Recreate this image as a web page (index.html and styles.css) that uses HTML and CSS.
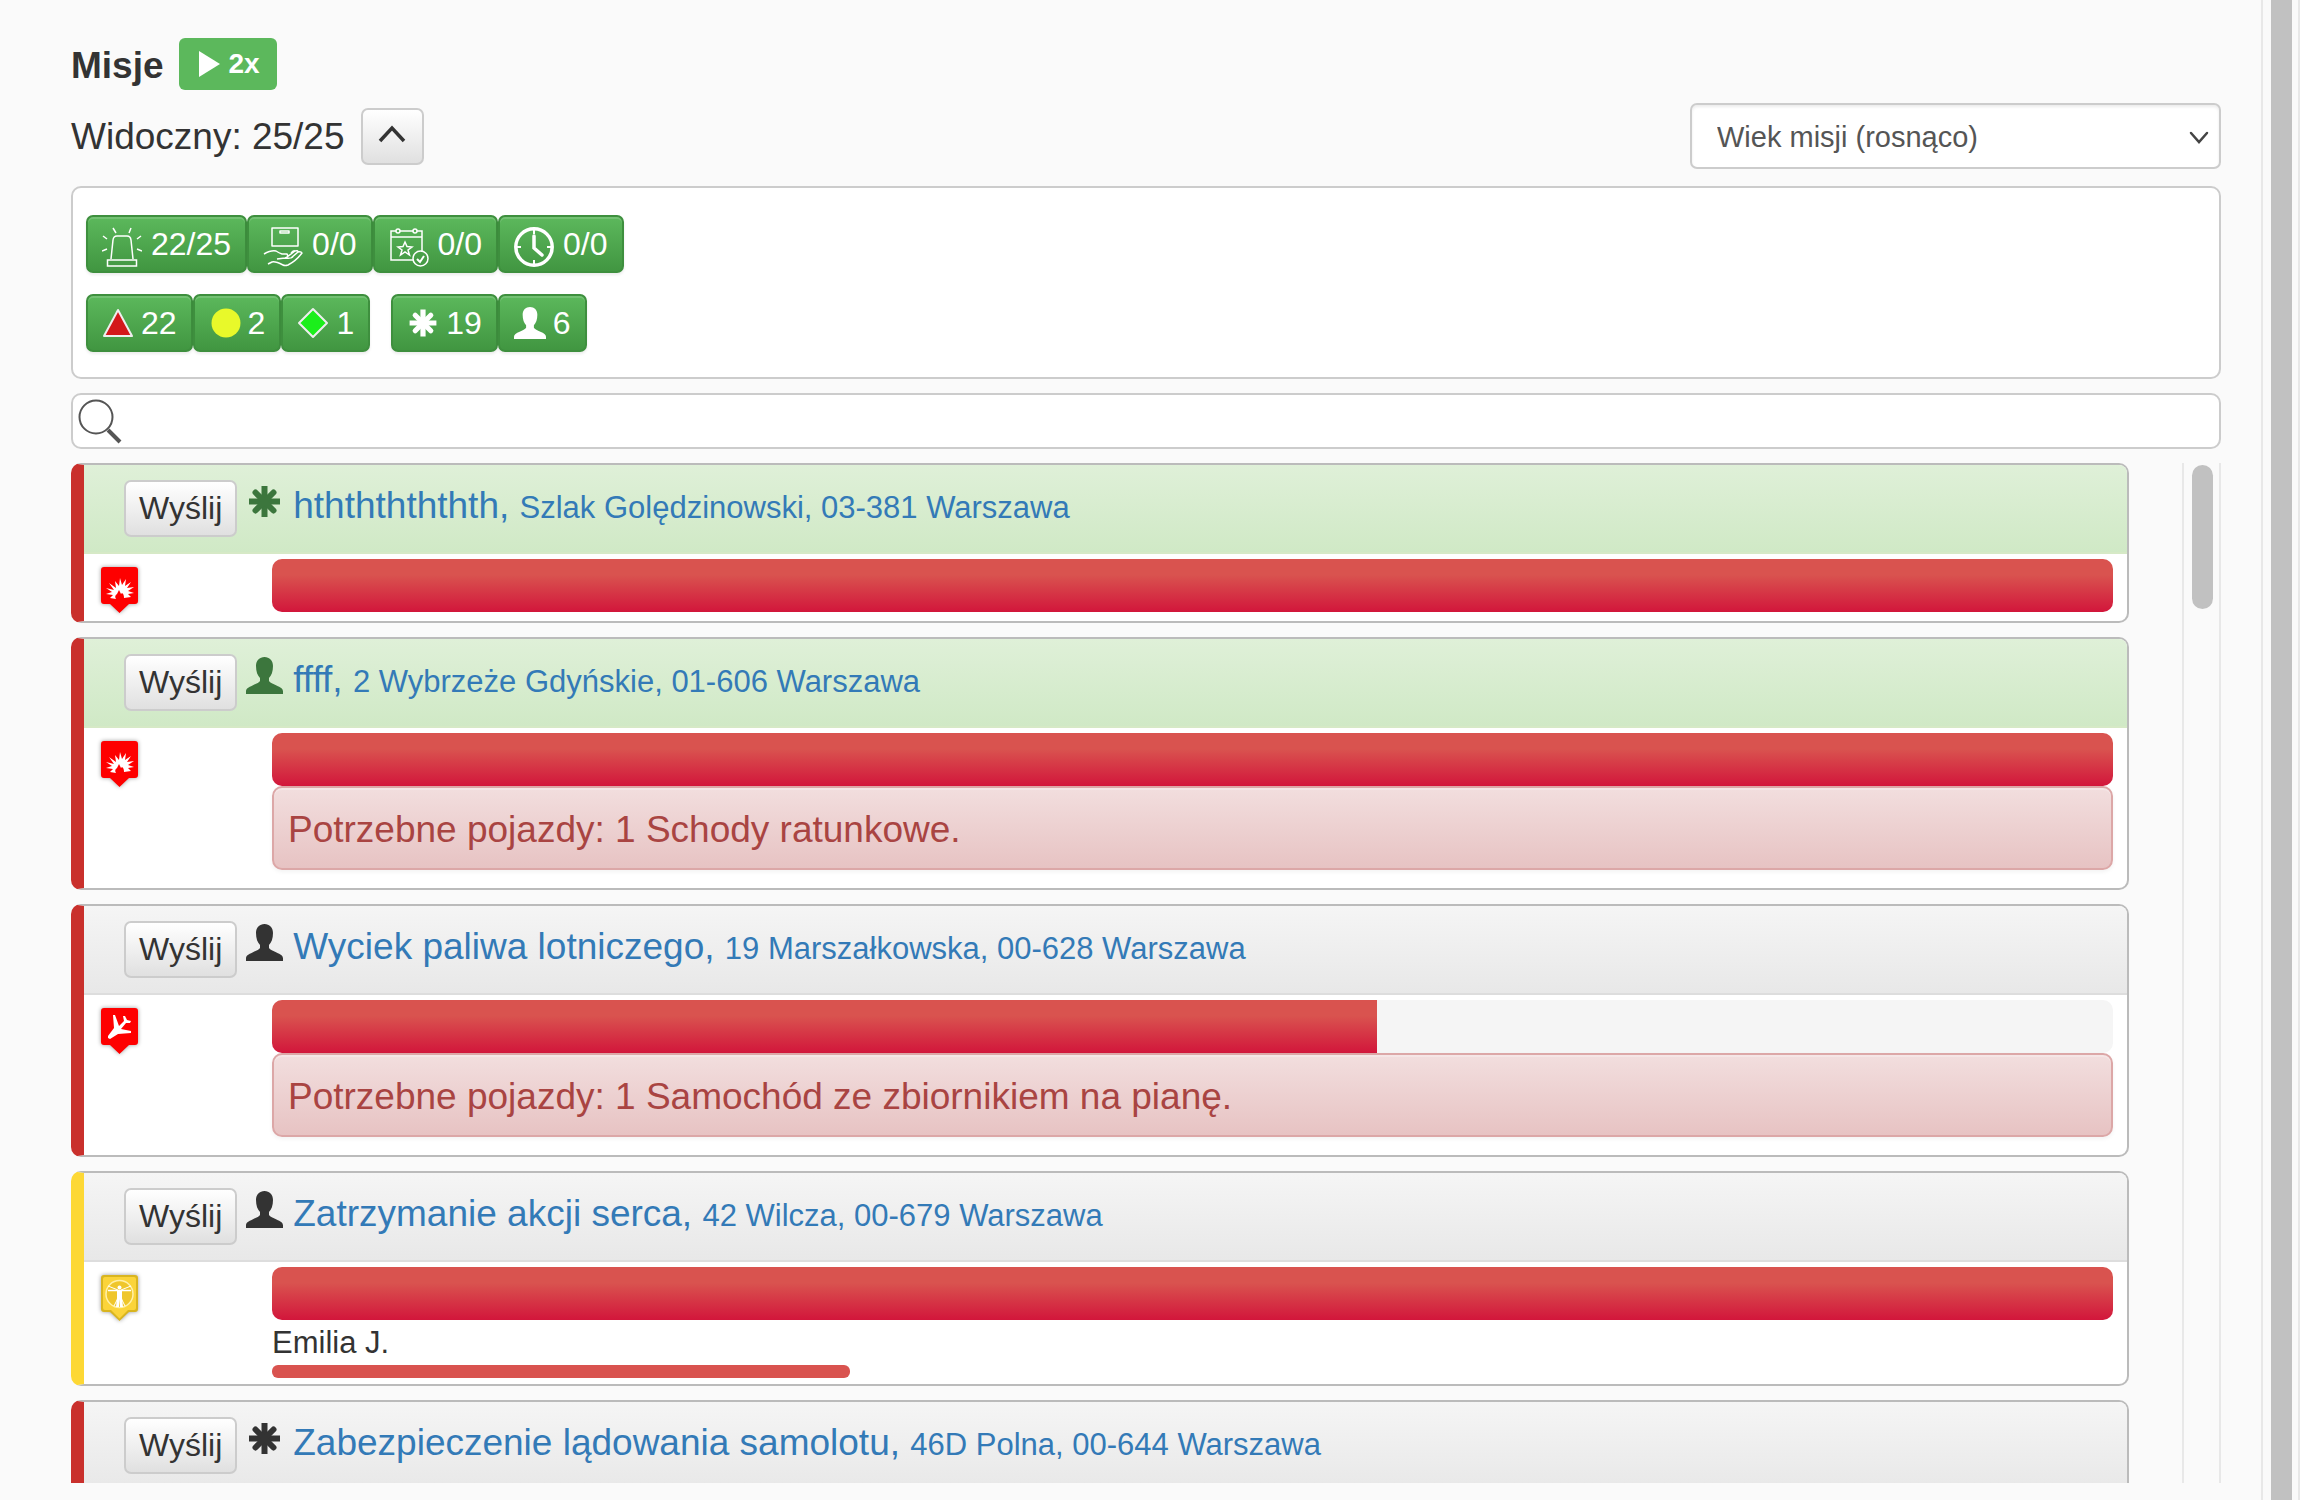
FILE: index.html
```html
<!DOCTYPE html>
<html lang="pl">
<head>
<meta charset="utf-8">
<meta name="viewport" content="width=device-width, initial-scale=1">
<title>Misje</title>
<link rel="stylesheet" href="styles.css">
</head>
<body>
<svg class="defs" aria-hidden="true">
  <symbol id="asterisk" viewBox="0 0 37 37">
    <g stroke="currentColor" stroke-width="6" stroke-linecap="round">
      <path stroke-linecap="butt" d="M18.500 3v31M3 18.500h31"/><path d="M9.500 9.500l18 18M27.500 9.500l-18 18"/>
    </g>
  </symbol>
  <symbol id="user" viewBox="0 0 37 37">
    <path fill="currentColor" d="M18.500 0C23.500 0 27 3.500 27 9c0 5.500-1.500 9.500-4 12v3c1 1.800 4 2.800 7.500 4.500 4 1.700 6.500 3.200 6.500 6V37H0v-2.500c0-2.800 2.500-4.300 6.500-6 3.500-1.700 6.500-2.700 7.500-4.500v-3c-2.500-2.500-4-6.500-4-12 0-5.500 3.500-9 8.500-9z"/>
  </symbol>
  <symbol id="pin" viewBox="0 0 37 46">
    <path d="M3 0h31a3 3 0 0 1 3 3v31a3 3 0 0 1-3 3h-6l-9.500 9L9 37H3a3 3 0 0 1-3-3V3a3 3 0 0 1 3-3z"/>
  </symbol>
  <symbol id="fire" viewBox="0 0 37 46">
    <use href="#pin" fill="#fe0000"/>
    <path fill="#fff" d="M9 31l3-3-7-1 6-2-6-4 8 2-5-7 7 5-1-7 4 5 1-8 2 7 4-6-1 7 6-4-4 6 7-1-6 4 6 2-6 1 3 3-7 1q0-4-2-5l-1 1-2-4-2 4q-3 2-1 5z"/>
  </symbol>
  <symbol id="plane" viewBox="0 0 37 46">
    <use href="#pin" fill="#fe0000"/>
    <path fill="#fff" d="M12 7l2 0 4 11 5-5-1-5 2 0 2 4 4 1-1 2-4 0-5 6 10 2 0 2-13 1-8 5-2-1 0-2 6-8z"/>
  </symbol>
</svg>

<main class="page">
  <header class="title-row">
    <h1 class="title">Misje</h1>
    <button class="speed" type="button"><svg width="21" height="26" viewBox="0 0 21 26" aria-hidden="true"><path d="M0 0l21 13L0 26z" fill="#fff"/></svg>2x</button>
  </header>

  <div class="toolbar">
    <span class="visible">Widoczny: 25/25</span>
    <button class="btn toggle" type="button" aria-label="Zwiń filtry"><svg width="28" height="25" viewBox="0 0 28 25" aria-hidden="true"><path d="M2 17L14 4l12 13" fill="none" stroke="#333" stroke-width="3.500"/></svg></button>
    <div class="sort">
      <select class="sort-select" aria-label="Sortowanie"><option>Wiek misji (rosnąco)</option></select>
      <svg class="sort-arrow" width="20" height="14" viewBox="0 0 20 14" aria-hidden="true"><path d="M2 2l8 9 8-9" fill="none" stroke="#444" stroke-width="2.500" stroke-linecap="round"/></svg>
    </div>
  </div>

  <section class="filters" aria-label="Filtry">
    <div class="filter-row">
      <div class="group">
        <button class="filter wide" type="button"><svg width="40" height="40" viewBox="0 0 40 40" fill="none" stroke="#fff" stroke-width="1.500" aria-hidden="true"><path d="M9 32l2-19q.5-4 4-4h10q3.500 0 4 4l2 19M5.500 33h29v6h-29zM11 1l3 5M29 1l-2 5M1 9l4 3M39 9l-4 3M0 24l5-2M40 24l-5-2"/></svg>22/25</button>
        <button class="filter wide" type="button"><svg width="40" height="40" viewBox="0 0 40 40" fill="none" stroke="#fff" stroke-width="1.500" stroke-linejoin="round" aria-hidden="true"><path d="M9 1h26v18H9zM17 4h9v2h-9zM1 27q7-4 12-3 3 2 6 3h5q2 3-2 4l-8 1M24 30l8-6q3-1 3 1l-7 6M28 26q3-3 4-2M35 25q3-1 4 1-6 8-14 12-3 1-5 0-8-4-11-3l-4 2M22 31q5 1 8-1"/></svg>0/0</button>
        <button class="filter wide" type="button"><svg width="40" height="40" viewBox="0 0 40 40" fill="none" stroke="#fff" stroke-width="1.500" aria-hidden="true"><path d="M24 33H2V4h5M11 4h13M28 4h5v21M2 10h31M16 15l2 4.500 5 .5-4 3 1.500 5-4.500-3-4.500 3 1.500-5-4-3 5-.5z"/><circle cx="9" cy="4" r="2"/><circle cx="26" cy="4" r="2"/><circle cx="31.500" cy="31.500" r="7.500"/><path stroke-width="2" d="M28 32l3 3 4-6"/></svg>0/0</button>
        <button class="filter wide" type="button"><svg width="40" height="40" viewBox="0 0 40 40" fill="none" stroke="#fff" aria-hidden="true"><circle cx="20" cy="20" r="18.200" stroke-width="3.500"/><path stroke-width="3.500" stroke-linecap="round" d="M20 9v12l8 7"/><path stroke-width="2" d="M20 3v4M20 33v4M3 20h4M33 20h4"/></svg>0/0</button>
      </div>
    </div>
    <div class="filter-row">
      <div class="group">
        <button class="filter" type="button"><svg width="32" height="32" viewBox="0 0 32 32" aria-hidden="true"><path d="M16 3l14 26H2z" fill="#d3171a" stroke="#eee" stroke-width="2" stroke-linejoin="round"/></svg>22</button>
        <button class="filter" type="button"><svg width="32" height="32" viewBox="0 0 32 32" aria-hidden="true"><circle cx="17" cy="16" r="14.500" fill="#e8f92a"/></svg>2</button>
        <button class="filter" type="button"><svg width="32" height="32" viewBox="0 0 32 32" aria-hidden="true"><path d="M16 2l14 14-14 14L2 16z" fill="#1bef1b" stroke="#eee" stroke-width="2" stroke-linejoin="round"/></svg>1</button>
      </div>
      <div class="group">
        <button class="filter" type="button"><svg width="32" height="32" aria-hidden="true"><use href="#asterisk"/></svg>19</button>
        <button class="filter" type="button"><svg width="32" height="32" aria-hidden="true"><use href="#user"/></svg>6</button>
      </div>
    </div>
  </section>

  <div class="search">
    <svg width="48" height="48" viewBox="0 0 48 48" fill="none" stroke="#555" aria-hidden="true"><circle cx="20" cy="20" r="16.500" stroke-width="2"/><path d="M32 33l12 12" stroke-width="4"/></svg>
    <input class="search-input" type="text" aria-label="Szukaj">
  </div>

  <div class="scroller">
    <div class="missions">
      <article class="mission">
        <div class="head own">
          <button class="btn send" type="button">Wyślij</button>
          <svg class="kind" aria-hidden="true"><use href="#asterisk"/></svg>
          <a class="name" href="#m1">hthththththth, <small>Szlak Golędzinowski, 03-381 Warszawa</small></a>
        </div>
        <div class="body">
          <svg class="marker" aria-hidden="true"><use href="#fire"/></svg>
          <div class="state">
            <div class="progress"><div class="fill" style="width:100%"></div></div>
          </div>
        </div>
      </article>

      <article class="mission">
        <div class="head own">
          <button class="btn send" type="button">Wyślij</button>
          <svg class="kind" aria-hidden="true"><use href="#user"/></svg>
          <a class="name" href="#m2">ffff, <small>2 Wybrzeże Gdyńskie, 01-606 Warszawa</small></a>
        </div>
        <div class="body">
          <svg class="marker" aria-hidden="true"><use href="#fire"/></svg>
          <div class="state">
            <div class="progress"><div class="fill" style="width:100%"></div></div>
            <div class="missing">Potrzebne pojazdy: 1 Schody ratunkowe.</div>
          </div>
        </div>
      </article>

      <article class="mission">
        <div class="head">
          <button class="btn send" type="button">Wyślij</button>
          <svg class="kind" aria-hidden="true"><use href="#user"/></svg>
          <a class="name" href="#m3">Wyciek paliwa lotniczego, <small>19 Marszałkowska, 00-628 Warszawa</small></a>
        </div>
        <div class="body">
          <svg class="marker" aria-hidden="true"><use href="#plane"/></svg>
          <div class="state">
            <div class="progress"><div class="fill" style="width:60%"></div></div>
            <div class="missing">Potrzebne pojazdy: 1 Samochód ze zbiornikiem na pianę.</div>
          </div>
        </div>
      </article>

      <article class="mission attended">
        <div class="head">
          <button class="btn send" type="button">Wyślij</button>
          <svg class="kind" aria-hidden="true"><use href="#user"/></svg>
          <a class="name" href="#m4">Zatrzymanie akcji serca, <small>42 Wilcza, 00-679 Warszawa</small></a>
        </div>
        <div class="body with-patient">
          <svg class="marker" viewBox="0 0 37 46" aria-hidden="true">
            <use href="#pin" fill="#d9b51f"/>
            <path fill="#fbd43a" d="M4 2h29q2 0 2 2v29q0 2-2 2h-6l-8.500 8.500L10 35H4q-2 0-2-2V4q0-2 2-2z"/>
            <circle cx="18.500" cy="19" r="13.500" fill="#efc62b" stroke="#fff0a8" stroke-width="1.500"/>
            <path d="M17 15l-10-4M20 15l10-4M17 23l-4 8M20 23l4 8" stroke="#fff" stroke-width="1"/>
            <path d="M7 15.500h23" stroke="#fff" stroke-width="1.500"/>
            <path d="M16 15h5v8l1 9h-3l-.5-8-.5 8h-3l1-9z" fill="#fff"/>
            <circle cx="18.500" cy="12.500" r="2" fill="#fff"/>
          </svg>
          <div class="state">
            <div class="progress"><div class="fill" style="width:100%"></div></div>
            <div class="patient">Emilia J.</div>
            <div class="health" style="width:31.400%"></div>
          </div>
        </div>
      </article>

      <article class="mission">
        <div class="head">
          <button class="btn send" type="button">Wyślij</button>
          <svg class="kind" aria-hidden="true"><use href="#asterisk"/></svg>
          <a class="name" href="#m5">Zabezpieczenie lądowania samolotu, <small>46D Polna, 00-644 Warszawa</small></a>
        </div>
        <div class="body">
          <svg class="marker" aria-hidden="true"><use href="#plane"/></svg>
          <div class="state">
            <div class="progress"><div class="fill" style="width:100%"></div></div>
          </div>
        </div>
      </article>
    </div>
    <div class="track" aria-hidden="true"><div class="thumb"></div></div>
  </div>
</main>
<div class="page-track" aria-hidden="true"><div class="page-thumb"></div></div>
</body>
</html>
```
FILE: styles.css
```css
* { box-sizing: border-box; }

body {
  margin: 0;
  height: 100vh;
  display: flex;
  overflow: hidden;
  background: #fafafa;
  color: #333;
  font-family: "Liberation Sans", Arial, sans-serif;
  font-size: 37px;
}

button, select, input { font-family: inherit; }
svg { flex: none; }
.defs { position: absolute; width: 0; height: 0; }

.page {
  flex: 1;
  min-width: 0;
  display: flex;
  flex-direction: column;
  padding: 38px 40px 17px 71px;
}

.title-row { display: flex; align-items: center; gap: 15px; }
.title { margin: 0; padding-top: 4px; font-size: 37px; line-height: 48px; }

.speed {
  display: flex;
  align-items: center;
  gap: 9px;
  height: 52px;
  padding: 0 17px 0 20px;
  border: 0;
  border-radius: 6px;
  background: #5cb85c;
  color: #fff;
  font-size: 28px;
  font-weight: bold;
}

.toolbar { display: flex; align-items: center; gap: 16px; margin-top: 13px; }
.visible { padding-top: 2px; }

.btn {
  display: flex;
  align-items: center;
  justify-content: center;
  height: 57px;
  padding: 0 13px;
  border: 2px solid #ccc;
  border-radius: 7px;
  background: linear-gradient(#fff, #e0e0e0);
  color: #333;
  font-size: 32px;
}
.toggle { width: 63px; }

.sort { position: relative; width: 531px; margin-left: auto; }
.sort-select {
  display: block;
  width: 100%;
  height: 66px;
  padding: 2px 25px 0;
  appearance: none;
  border: 2px solid #ccc;
  border-radius: 7px;
  background: #fff;
  box-shadow: inset 0 2px 3px rgba(0, 0, 0, .08);
  color: #555;
  font-size: 29px;
}
.sort-arrow { position: absolute; right: 12px; top: 28px; pointer-events: none; }

.filters {
  display: flex;
  flex-direction: column;
  gap: 21px;
  margin-top: 17px;
  padding: 27px 13px 25px;
  border: 2px solid #ccc;
  border-radius: 10px;
  background: #fff;
}
.filter-row { display: flex; gap: 21px; }
.group { display: flex; }

.filter {
  display: flex;
  align-items: center;
  gap: 7px;
  height: 58px;
  padding: 0 14px;
  border: 2px solid #3e8f3e;
  border-radius: 7px;
  background: linear-gradient(#5cb85c, #419641);
  box-shadow: inset 0 2px 0 rgba(255, 255, 255, .15), 0 2px 3px rgba(0, 0, 0, .08);
  color: #fff;
  font-size: 32px;
}
.wide { gap: 9px; }
.wide svg { margin-top: 6px; }

.search {
  display: flex;
  align-items: center;
  height: 56px;
  margin: 14px 0;
  padding-left: 3px;
  border: 2px solid #ccc;
  border-radius: 10px;
  background: #fff;
}
.search-input {
  flex: 1;
  height: 100%;
  border: 0;
  outline: 0;
  background: transparent;
  font-size: 32px;
}

.scroller { flex: 1; min-height: 0; display: flex; gap: 53px; overflow: hidden; }
.missions { flex: 1; min-width: 0; }

.mission {
  margin-bottom: 14px;
  overflow: hidden;
  border: 2px solid #bbb;
  border-left: 13px solid #c9302c;
  border-radius: 10px;
  background: #fff;
}
.attended { border-left-color: #fdd835; }

.head {
  display: flex;
  align-items: flex-start;
  padding: 15px 40px;
  border-bottom: 2px solid #ddd;
  background: linear-gradient(#f5f5f5, #e8e8e8);
}
.own {
  border-bottom-color: #d6e9c6;
  background: linear-gradient(#dff0d8, #d0e9c6);
  color: #3c763d;
}
.kind { width: 37px; height: 43px; margin: 0 10px 0 9px; }
.name { color: #337ab7; line-height: 51px; text-decoration: none; }
.name small { font-size: 31px; }

.body { display: flex; padding: 5px 14px 8px 17px; }
.with-patient { padding-bottom: 6px; }
.marker {
  width: 37px;
  height: 46px;
  margin: 8px 134px 0 0;
  overflow: visible;
  filter: drop-shadow(0 0 2px rgba(0, 0, 0, .4));
}
.state { flex: 1; min-width: 0; }

.progress {
  height: 53px;
  overflow: hidden;
  border-radius: 10px;
  background: #f5f5f5;
}
.fill { height: 100%; background: linear-gradient(#d9534f, #d9534f 30%, #d2163b); }

.missing {
  margin-bottom: 10px;
  padding: 16px 14px 12px;
  border: 2px solid #dca7a7;
  border-radius: 10px;
  background: linear-gradient(#f2dede, #e7c3c3);
  box-shadow: inset 0 2px 0 rgba(255, 255, 255, .25), 0 2px 4px rgba(0, 0, 0, .05);
  color: #a94442;
  line-height: 52px;
}

.patient { font-size: 31px; line-height: 45px; }
.health { height: 13px; border-radius: 6px; background: #d9534f; }

.track {
  width: 39px;
  padding: 2px 0 0 8px;
  border: solid #e8e8e8;
  border-width: 0 2px;
}
.thumb { width: 21px; height: 144px; border-radius: 11px; background: #c1c1c1; }

.page-track {
  width: 39px;
  padding-left: 8px;
  border: solid #e8e8e8;
  border-width: 0 2px;
}
.page-thumb { width: 21px; height: 100%; background: #c1c1c1; }
```
